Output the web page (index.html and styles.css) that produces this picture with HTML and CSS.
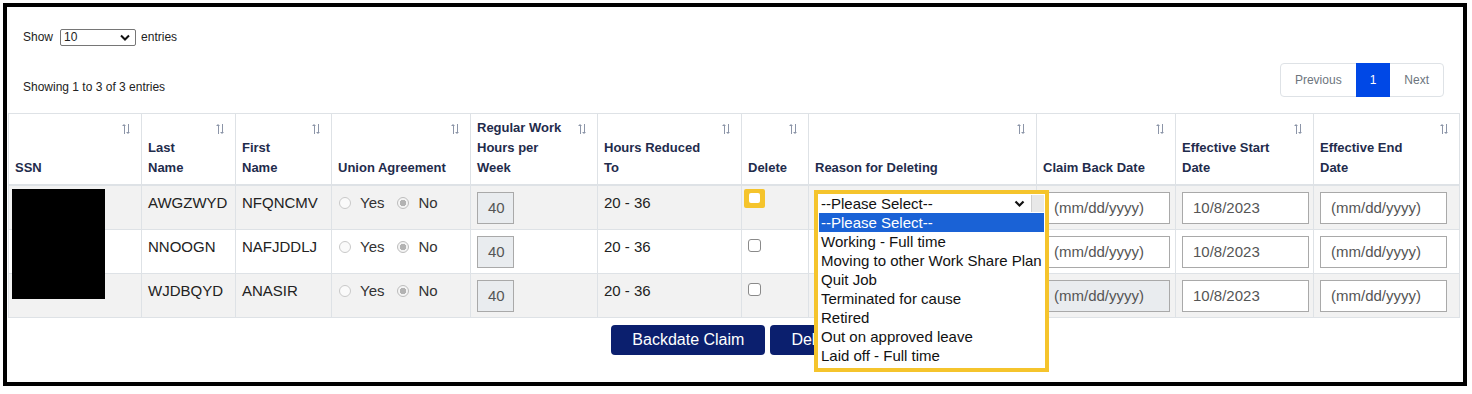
FILE: index.html
```html
<!DOCTYPE html>
<html lang="en">

<head>
    <meta charset="UTF-8">
    <meta name="viewport" content="width=device-width, initial-scale=1.0">
    <title>Work Share - Employees</title>
    <link rel="stylesheet" href="styles.css">
</head>

<body>
    <div class="frame">

        <div class="dt-length">
            Show
            <span class="length-select">10
                <svg width="10" height="7" viewBox="0 0 10 7"><path d="M1 1.5 L5 5.5 L9 1.5" fill="none" stroke="#111" stroke-width="2"/></svg>
            </span>
            entries
        </div>

        <div class="dt-bar">
            <div class="dt-info">Showing 1 to 3 of 3 entries</div>
            <div class="pager">
                <span class="page-link">Previous</span>
                <span class="page-link current">1</span>
                <span class="page-link">Next</span>
            </div>
        </div>

        <table class="claims">
            <colgroup>
                <col style="width:133px">
                <col style="width:94px">
                <col style="width:96px">
                <col style="width:139px">
                <col style="width:127px">
                <col style="width:144px">
                <col style="width:67px">
                <col style="width:228px">
                <col style="width:139px">
                <col style="width:138px">
                <col style="width:146px">
            </colgroup>
            <thead>
                <tr>
                    <th>SSN<span class="sort"></span></th>
                    <th>Last<br>Name<span class="sort"></span></th>
                    <th>First<br>Name<span class="sort"></span></th>
                    <th>Union Agreement<span class="sort"></span></th>
                    <th>Regular Work<br>Hours per<br>Week<span class="sort"></span></th>
                    <th>Hours Reduced<br>To<span class="sort"></span></th>
                    <th>Delete<span class="sort"></span></th>
                    <th>Reason for Deleting<span class="sort"></span></th>
                    <th>Claim Back Date<span class="sort"></span></th>
                    <th>Effective Start<br>Date<span class="sort"></span></th>
                    <th>Effective End<br>Date<span class="sort"></span></th>
                </tr>
            </thead>
            <tbody>
                <tr class="odd">
                    <td class="ssn"><div class="redacted"></div></td>
                    <td>AWGZWYD</td>
                    <td>NFQNCMV</td>
                    <td><span class="radio"></span><span class="opt">Yes</span><span class="radio checked"></span><span class="opt">No</span></td>
                    <td><div class="box hours">40</div></td>
                    <td>20 - 36</td>
                    <td><span class="check marked"><span></span></span></td>
                    <td class="reason">
                        <!-- open dropdown, highlighted -->
                        <div class="callout">
                            <div class="reason-select">
                                <span class="reason-value">--Please Select--</span>
                                <svg width="11" height="8" viewBox="0 0 11 8"><path d="M1.5 1.5 L5.5 5.5 L9.5 1.5" fill="none" stroke="#111" stroke-width="2.2"/></svg>
                                <span class="reason-end"></span>
                            </div>
                            <ul class="reason-list">
                                <li class="active">--Please Select--</li>
                                <li>Working - Full time</li>
                                <li>Moving to other Work Share Plan</li>
                                <li>Quit Job</li>
                                <li>Terminated for cause</li>
                                <li>Retired</li>
                                <li>Out on approved leave</li>
                                <li>Laid off - Full time</li>
                            </ul>
                        </div>
                    </td>
                    <td><div class="box date">(mm/dd/yyyy)</div></td>
                    <td><div class="box date">10/8/2023</div></td>
                    <td><div class="box date">(mm/dd/yyyy)</div></td>
                </tr>
                <tr>
                    <td class="ssn"></td>
                    <td>NNOOGN</td>
                    <td>NAFJDDLJ</td>
                    <td><span class="radio"></span><span class="opt">Yes</span><span class="radio checked"></span><span class="opt">No</span></td>
                    <td><div class="box hours">40</div></td>
                    <td>20 - 36</td>
                    <td><span class="check"></span></td>
                    <td class="reason"></td>
                    <td><div class="box date">(mm/dd/yyyy)</div></td>
                    <td><div class="box date">10/8/2023</div></td>
                    <td><div class="box date">(mm/dd/yyyy)</div></td>
                </tr>
                <tr class="odd">
                    <td class="ssn"></td>
                    <td>WJDBQYD</td>
                    <td>ANASIR</td>
                    <td><span class="radio"></span><span class="opt">Yes</span><span class="radio checked"></span><span class="opt">No</span></td>
                    <td><div class="box hours">40</div></td>
                    <td>20 - 36</td>
                    <td><span class="check"></span></td>
                    <td class="reason"></td>
                    <td><div class="box date disabled">(mm/dd/yyyy)</div></td>
                    <td><div class="box date">10/8/2023</div></td>
                    <td><div class="box date">(mm/dd/yyyy)</div></td>
                </tr>
            </tbody>
        </table>

        <div class="actions">
            <button type="button" class="btn">Backdate Claim</button>
            <button type="button" class="btn">Delete</button>
        </div>
    </div>
</body>

</html>
```

FILE: styles.css
```css
/* Work share employee list */

body {
    font-family: "Liberation Sans", Arial, sans-serif;
    margin: 0;
    padding: 0;
    background-color: #fff;
    color: #222;
}

.frame {
    width: 1464px;
    height: 383px;
    margin: 3px;
    border: 4px solid #000;
    box-sizing: border-box;
    background: #fff;
}

/* top controls */

.dt-length {
    margin: 22px 0 0 16px;
    height: 17px;
    font-size: 12px;
    line-height: 17px;
    display: flex;
    align-items: center;
    color: #222;
}

.length-select {
    display: inline-flex;
    align-items: center;
    justify-content: space-between;
    box-sizing: border-box;
    width: 76px;
    height: 17px;
    margin: 0 5px 0 7px;
    padding: 0 5px 0 3px;
    border: 1px solid #767676;
    border-radius: 2px;
}

.dt-bar {
    display: flex;
    justify-content: space-between;
    align-items: flex-end;
    margin: 17px 19px 0 16px;
}

.dt-info {
    font-size: 12px;
    line-height: 14px;
    padding-bottom: 3px;
}

.pager {
    display: flex;
    height: 34px;
    border: 1px solid #dee2e6;
    border-radius: 4px;
    box-sizing: border-box;
    font-size: 12px;
}

.page-link {
    display: flex;
    align-items: center;
    padding: 0 14px;
    color: #6c757d;
}

.page-link.current {
    background-color: #0048e6;
    color: #fff;
    padding: 0 14px;
    margin: -1px 0;
}

/* table */

.claims {
    margin: 16px 0 0 1px;
    width: 1451px;
    table-layout: fixed;
    border-collapse: collapse;
}

.claims th,
.claims td {
    border: 1px solid #dee2e6;
    text-align: left;
}

.claims th {
    position: relative;
    padding: 4px 6px 6px;
    font-size: 13px;
    line-height: 20px;
    font-weight: bold;
    color: #1f2c4c;
    vertical-align: bottom;
    border-bottom: 2px solid #dee2e6;
}

.sort {
    position: absolute;
    top: 10px;
    right: 10px;
    width: 9px;
    height: 10px;
    background:
        linear-gradient(#8c95a8, #8c95a8) 2px 1px / 1px 9px no-repeat,
        linear-gradient(#8c95a8, #8c95a8) 6px 0 / 1px 9px no-repeat;
}

.sort::before,
.sort::after {
    content: "";
    position: absolute;
    border: 2px solid transparent;
}

.sort::before {
    left: 0;
    top: -2px;
    border-bottom-color: #8c95a8;
}

.sort::after {
    left: 4px;
    bottom: -2px;
    border-top-color: #8c95a8;
}

.claims td {
    padding: 5px 6px 5px;
    font-size: 15px;
    line-height: 24px;
    vertical-align: top;
    color: #222;
}

.claims tr.odd td {
    background-color: #f2f2f2;
}

.claims td.ssn,
.claims td.reason {
    position: relative;
}

.redacted {
    position: absolute;
    top: 3px;
    left: 3px;
    width: 93px;
    height: 110px;
    background: #000;
    z-index: 2;
}

/* form bits */

.radio {
    display: inline-block;
    width: 12px;
    height: 12px;
    border: 1px solid #c9c9c9;
    border-radius: 50%;
    background: #fafafa;
    vertical-align: -1px;
    box-sizing: border-box;
    margin: 0 9px 0 1px;
}

.radio.checked {
    border-color: #bdbdbd;
    background: radial-gradient(circle, #b3b3b3 0 3px, #f4f4f4 3.5px);
}

.opt {
    margin-right: 12px;
    color: #333;
}

.box {
    display: block;
    box-sizing: border-box;
    height: 32px;
    margin-top: 1px;
    border: 1px solid #a9a9a9;
    background: #fff;
    color: #555;
    font-size: 15px;
    line-height: 30px;
    padding-left: 10px;
}

.box.hours {
    width: 37px;
    background: #e9ecef;
}

.box.date {
    width: 127px;
}

.box.disabled {
    background: #e9ecef;
}

.check {
    display: inline-block;
    width: 13px;
    height: 13px;
    margin-top: 2px;
    border: 1px solid #8a8a8a;
    border-radius: 3px;
    box-sizing: border-box;
    background: #fff;
}

.check.marked {
    width: 21px;
    height: 19px;
    margin: -2px 0 0 -4px;
    border: 3px solid #f5c42c;
    border-radius: 2px;
    background: #f5c42c;
    padding: 1px 2px;
}

.check.marked span {
    display: block;
    height: 10px;
    background: #fff;
    border-radius: 2px;
}

/* open reason dropdown with highlight */

.callout {
    position: absolute;
    top: 4px;
    left: 5px;
    z-index: 3;
    width: 235px;
    height: 182px;
    box-sizing: border-box;
    border: 4px solid #f5c42c;
    padding: 1px 0 0 1px;
    background: #fff;
}

.reason-select {
    display: flex;
    align-items: center;
    height: 17px;
    font-size: 15px;
    line-height: 17px;
    color: #111;
}

.reason-value {
    width: 193px;
    padding-left: 2px;
}

.reason-end {
    width: 12px;
    height: 17px;
    margin-left: 6px;
    background: #e8e8e8;
    border-left: 1px solid #cfcfcf;
}

.reason-list {
    list-style: none;
    margin: 1px 0 0;
    padding: 0;
    width: 225px;
    overflow: hidden;
}

.reason-list li {
    height: 19px;
    line-height: 19px;
    font-size: 15px;
    padding-left: 2px;
    white-space: nowrap;
    color: #111;
}

.reason-list li.active {
    background-color: #1a62d6;
    color: #fff;
}

/* buttons */

.actions {
    display: flex;
    justify-content: center;
    gap: 5px;
    margin-top: 7px;
}

.btn {
    height: 30px;
    padding: 0 21px;
    border: none;
    border-radius: 4px;
    background-color: #0b1f6e;
    color: #fff;
    font-family: "Liberation Sans", Arial, sans-serif;
    font-size: 16px;
    cursor: pointer;
}
```
